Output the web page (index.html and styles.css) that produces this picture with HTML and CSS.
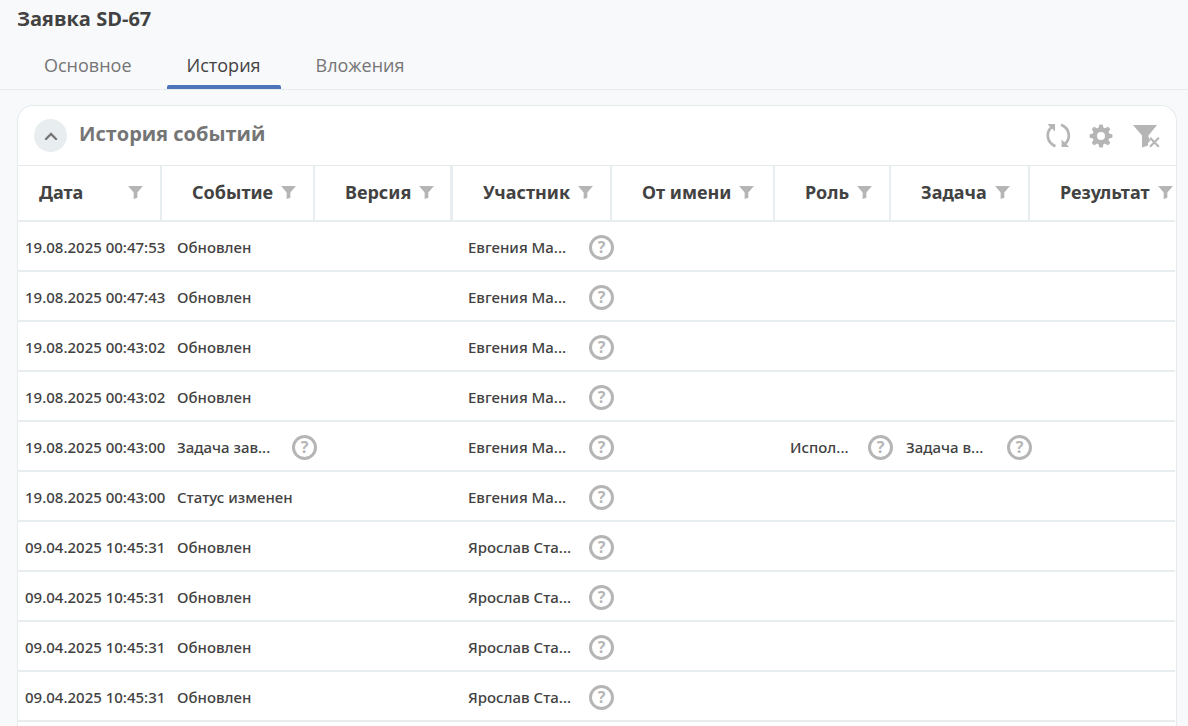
FILE: index.html
```html
<!DOCTYPE html>
<html lang="ru">
<head>
<meta charset="utf-8">
<meta name="viewport" content="width=device-width, initial-scale=1">
<title>Заявка SD-67</title>
<link rel="stylesheet" href="styles.css">
</head>
<body>
<svg class="sprite" aria-hidden="true">
  <symbol id="funnel" viewBox="0 0 16 14"><path d="M0 0H16L10 7V12.6L6 14V7Z"/></symbol>
</svg>
<div class="app">
  <header class="page-head">
    <h1 class="page-title">Заявка SD-67</h1>
    <nav class="tabs">
      <button class="tab" type="button">Основное</button>
      <button class="tab tab-active" type="button" aria-current="page">История</button>
      <button class="tab" type="button">Вложения</button>
    </nav>
  </header>
  <main class="content">
    <section class="card">
      <div class="card-head">
        <button class="collapse" type="button" aria-label="Свернуть">
          <svg width="14" height="8" viewBox="0 0 14 8"><path d="M2 7L7 2L12 7" fill="none" stroke="#767676" stroke-width="2.4" stroke-linecap="round"/></svg>
        </button>
        <h2 class="card-title">История событий</h2>
        <div class="tools">
          <button class="tool" type="button" aria-label="Обновить">
            <svg width="26" height="26" viewBox="0 0 26 26"><g id="arrow"><path d="M9.500 23.200C0.200 19.500-0.200 8.800 5.800 4" fill="none" stroke="#b5b5b5" stroke-width="2.700"/><path d="M1.500 1H9V8.500L6.800 6.200 4.300 4Z" fill="#b5b5b5"/></g><use href="#arrow" transform="rotate(180 12.300 12.500)"/></svg>
          </button>
          <button class="tool" type="button" aria-label="Настройки">
            <svg width="26" height="26" viewBox="1 0 26 26"><g fill="#b5b5b5"><path fill-rule="evenodd" d="M13 4.500A8.500 8.500 0 1 1 13 21.500A8.500 8.500 0 1 1 13 4.500ZM13 9A4 4 0 1 0 13 17A4 4 0 1 0 13 9Z"/><path id="tooth" d="M10.200 6L11.200 1.800Q13 1.200 14.800 1.800L15.800 6Z"/><use href="#tooth" transform="rotate(45 13 13)"/><use href="#tooth" transform="rotate(90 13 13)"/><use href="#tooth" transform="rotate(135 13 13)"/><use href="#tooth" transform="rotate(180 13 13)"/><use href="#tooth" transform="rotate(225 13 13)"/><use href="#tooth" transform="rotate(270 13 13)"/><use href="#tooth" transform="rotate(315 13 13)"/></g></svg>
          </button>
          <button class="tool" type="button" aria-label="Сбросить фильтры">
            <svg width="28" height="26" viewBox="0 0 28 26"><path d="M1 2H25L16.500 12.500V14.500L19 17L16 20V22.500L10 24.500V12.500Z" fill="#b5b5b5"/><path d="M18 14.800L26.800 23.800M26.800 14.800L18 23.800" stroke="#fff" stroke-width="3" fill="none"/><path d="M18 14.800L26.800 23.800M26.800 14.800L18 23.800" stroke="#b5b5b5" stroke-width="2" fill="none"/></svg>
          </button>
        </div>
      </div>
      <div class="table-wrap">
        <table class="grid">
          <colgroup>
            <col class="c-date"><col class="c-event"><col class="c-version"><col class="c-user"><col class="c-behalf"><col class="c-role"><col class="c-task"><col>
          </colgroup>
          <thead><tr id="head"></tr></thead>
          <tbody id="rows"></tbody>
        </table>
      </div>
    </section>
  </main>
</div>
<script src="app.js"></script>
</body>
</html>
```

FILE: styles.css
```css
* { box-sizing: border-box; }

body {
  margin: 0;
  background: #f8f9fb;
  color: #424242;
  font-family: "Open Sans", "Noto Sans", sans-serif;
  font-size: 15px;
}

button {
  margin: 0;
  padding: 0;
  border: 0;
  background: none;
  color: inherit;
  font: inherit;
  cursor: pointer;
}

svg { display: block; }

.sprite { display: none; }

.app {
  display: flex;
  flex-direction: column;
  height: 100vh;
  overflow: hidden;
}

.page-head { border-bottom: 1px solid #e6ebed; }

.page-title {
  margin: 0;
  padding: 6px 17px 0;
  font-size: 20px;
  line-height: 26px;
  font-weight: 700;
}

.tabs {
  display: flex;
  gap: 15px;
  padding: 10px 24px 0;
}

.tab {
  height: 47px;
  padding: 2px 20px 0;
  border-bottom: 4px solid transparent;
  border-radius: 2px 2px 0 0;
  color: #757575;
  font-size: 18px;
  line-height: 24px;
}

.tab-active {
  position: relative;
  color: #424242;
}

.tab-active::after {
  content: "";
  position: absolute;
  right: 0;
  bottom: -4px;
  left: 0;
  height: 4px;
  border-radius: 2px 2px 0 0;
  background: #4b74b9;
}

.content {
  display: flex;
  flex: 1;
  min-height: 0;
  padding: 15px 11px 0 17px;
}

.card {
  flex: 1;
  min-width: 0;
  overflow: hidden;
  border: 1px solid #e6ebed;
  border-bottom: 0;
  border-radius: 16px 16px 0 0;
  background: #fff;
}

.card-head {
  display: flex;
  align-items: center;
  height: 60px;
  padding: 0 16px;
  border-bottom: 1px solid #e6ebed;
}

.collapse {
  display: grid;
  place-items: center;
  width: 33px;
  height: 33px;
  border-radius: 50%;
  background: #e8edef;
}

.card-title {
  flex: 1;
  margin: 0;
  padding: 0 0 4px 12px;
  color: #757575;
  font-size: 20px;
  line-height: 28px;
  font-weight: 700;
}

.tools {
  display: flex;
  gap: 17px;
}

.table-wrap {
  margin-right: 1px;
  overflow: hidden;
}

.grid {
  width: 100%;
  table-layout: fixed;
  border-collapse: separate;
  border-spacing: 0;
}

.c-date { width: 144px; }
.c-event { width: 153px; }
.c-version { width: 138px; }
.c-user { width: 159px; }
.c-behalf { width: 163px; }
.c-role { width: 116px; }
.c-task { width: 139px; }

.grid th {
  height: 56px;
  padding: 0 0 2px 30px;
  overflow: hidden;
  border-right: 2px solid #e8edef;
  border-bottom: 2px solid #e8edef;
  font-family: "Noto Sans", "Open Sans", sans-serif;
  font-size: 18px;
  font-weight: 700;
  text-align: left;
}

.grid th:first-child { padding: 0 17px 2px 21px; }
.grid th:nth-child(3) { border-right-width: 3px; }
.grid th:last-child { border-right: 0; }

.th-inner {
  display: flex;
  align-items: center;
  gap: 8px;
  white-space: nowrap;
}

.grid th:first-child .th-inner { justify-content: space-between; }

.filter {
  flex: none;
  color: #b5b5b5;
}

.grid td {
  height: 50px;
  padding: 2px 0 0 15px;
  border-bottom: 2px solid #e8edef;
  font-family: "Noto Sans", "Open Sans", sans-serif;
  font-weight: 500;
  line-height: 20px;
  white-space: nowrap;
}

.grid td:first-child { padding-left: 7px; }

.cell {
  display: flex;
  align-items: center;
  justify-content: space-between;
}

.help {
  flex: none;
  width: 25px;
  height: 25px;
  margin-right: -2px;
  border: 3px solid #b5b5b5;
  border-radius: 50%;
  color: #b5b5b5;
  font-size: 16px;
  line-height: 19px;
  font-weight: 700;
}
```

FILE: app.js
```js
const columns = ["Дата", "Событие", "Версия", "Участник", "От имени", "Роль", "Задача", "Результат"];

const M = "Евгения Ма...";
const S = "Ярослав Ста...";
const rows = [
  ["19.08.2025 00:47:53", "Обновлен", "", M, "", "", "", ""],
  ["19.08.2025 00:47:43", "Обновлен", "", M, "", "", "", ""],
  ["19.08.2025 00:43:02", "Обновлен", "", M, "", "", "", ""],
  ["19.08.2025 00:43:02", "Обновлен", "", M, "", "", "", ""],
  ["19.08.2025 00:43:00", "Задача зав...", "", M, "", "Испол...", "Задача в...", ""],
  ["19.08.2025 00:43:00", "Статус изменен", "", M, "", "", "", ""],
  ["09.04.2025 10:45:31", "Обновлен", "", S, "", "", "", ""],
  ["09.04.2025 10:45:31", "Обновлен", "", S, "", "", "", ""],
  ["09.04.2025 10:45:31", "Обновлен", "", S, "", "", "", ""],
  ["09.04.2025 10:45:31", "Обновлен", "", S, "", "", "", ""]
];

document.getElementById("head").innerHTML = columns.map(name =>
  `<th scope="col"><div class="th-inner"><span>${name}</span><button class="filter" type="button" aria-label="Фильтр: ${name}"><svg width="15" height="13" fill="currentColor"><use href="#funnel"/></svg></button></div></th>`
).join("");

const cell = text => text.endsWith("...")
  ? `<td><div class="cell"><span>${text}</span><button class="help" type="button" aria-label="Показать полностью">?</button></div></td>`
  : `<td>${text}</td>`;

document.getElementById("rows").innerHTML = rows.map(r => `<tr>${r.map(cell).join("")}</tr>`).join("");
```
